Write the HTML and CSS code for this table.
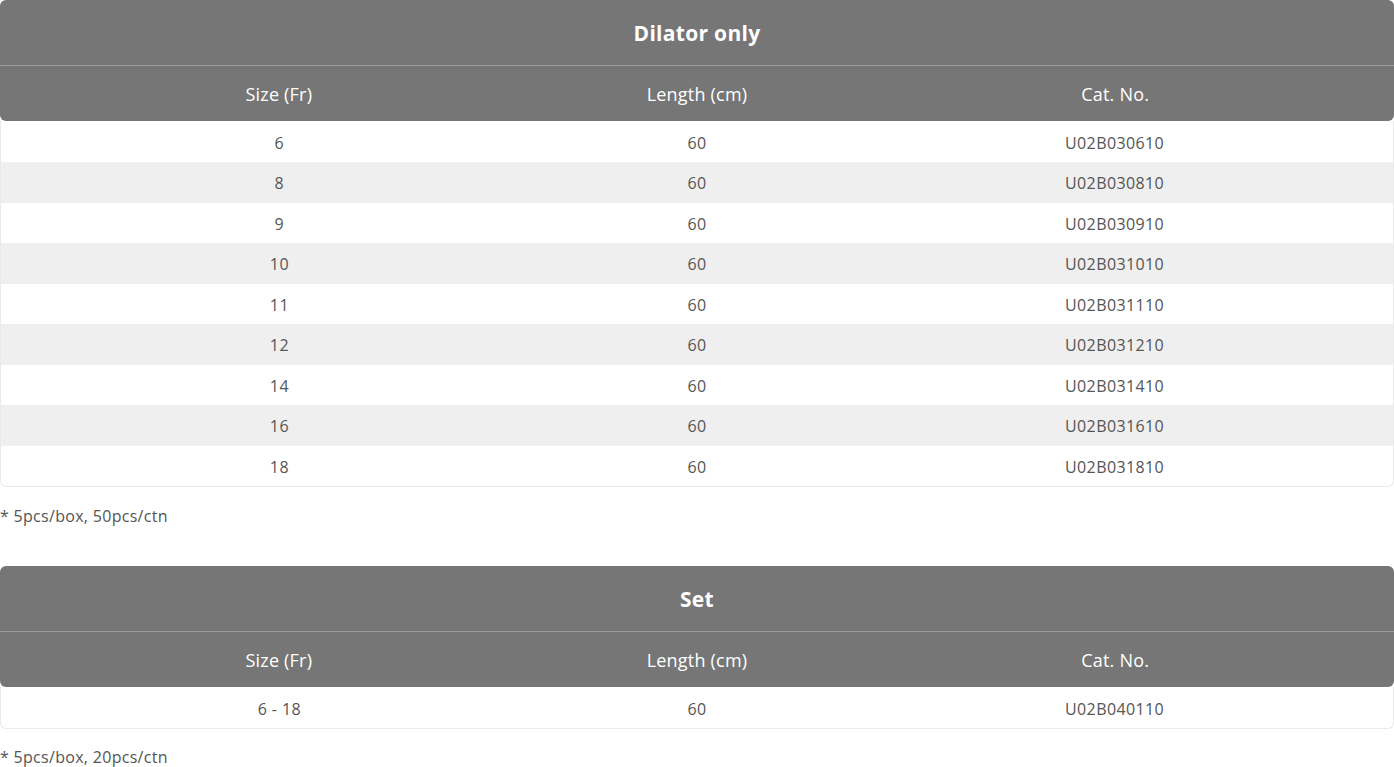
FILE: index.html
```html
<!DOCTYPE html>
<html>
<head>
<meta charset="utf-8">
<link rel="stylesheet" href="styles.css">
</head>
<body>
<section class="block">
  <div class="head">
    <div class="title">Dilator only</div>
    <div class="cols">
      <div class="c1">Size (Fr)</div><div class="c2">Length (cm)</div><div class="c3">Cat. No.</div>
    </div>
  </div>
  <div class="body">
    <div class="row"><div class="c1">6</div><div class="c2">60</div><div class="c3">U02B030610</div></div>
    <div class="row alt"><div class="c1">8</div><div class="c2">60</div><div class="c3">U02B030810</div></div>
    <div class="row"><div class="c1">9</div><div class="c2">60</div><div class="c3">U02B030910</div></div>
    <div class="row alt"><div class="c1">10</div><div class="c2">60</div><div class="c3">U02B031010</div></div>
    <div class="row"><div class="c1">11</div><div class="c2">60</div><div class="c3">U02B031110</div></div>
    <div class="row alt"><div class="c1">12</div><div class="c2">60</div><div class="c3">U02B031210</div></div>
    <div class="row"><div class="c1">14</div><div class="c2">60</div><div class="c3">U02B031410</div></div>
    <div class="row alt"><div class="c1">16</div><div class="c2">60</div><div class="c3">U02B031610</div></div>
    <div class="row"><div class="c1">18</div><div class="c2">60</div><div class="c3">U02B031810</div></div>
  </div>
  <p class="note">* 5pcs/box, 50pcs/ctn</p>
</section>
<section class="block">
  <div class="head">
    <div class="title">Set</div>
    <div class="cols">
      <div class="c1">Size (Fr)</div><div class="c2">Length (cm)</div><div class="c3">Cat. No.</div>
    </div>
  </div>
  <div class="body">
    <div class="row"><div class="c1">6 - 18</div><div class="c2">60</div><div class="c3">U02B040110</div></div>
  </div>
  <p class="note last">* 5pcs/box, 20pcs/ctn</p>
</section>
</body>
</html>
```
FILE: styles.css
```css
* { box-sizing: border-box; }
html, body { margin: 0; padding: 0; background: #fff; }
body {
  font-family: "Open Sans", "Liberation Sans", sans-serif;
  color: #555;
  width: 1394px;
}
.block { display: flex; flex-direction: column; }
.head {
  background: #767676;
  color: #fff;
  border-radius: 6px;
}
.title {
  height: 66px;
  display: flex;
  align-items: center;
  justify-content: center;
  font-size: 21px;
  font-weight: 700;
  letter-spacing: 0.3px;
  border-bottom: 1px solid #9a9a9a;
}
.cols {
  height: 55px;
  display: grid;
  grid-template-columns: 40% 20% 40%;
  align-items: center;
  text-align: center;
  font-size: 18px;
  font-weight: 400;
  letter-spacing: 0.2px;
}
.body {
  border: 1px solid #eaeaea;
  border-top: none;
  border-radius: 0 0 6px 6px;
  padding-top: 0.5px;
}
.row {
  height: 40.5px;
  display: grid;
  grid-template-columns: 40% 20% 40%;
  align-items: center;
  text-align: center;
  font-size: 16px;
  letter-spacing: 0.4px;
  padding-top: 2px;
}
.row.alt { background: #efefef; }
.note {
  margin: 19px 0 40px;
  font-size: 16px;
  line-height: 20px;
  color: #555;
  letter-spacing: 0.3px;
}
.note.last { margin: 18px 0 0; }
```
